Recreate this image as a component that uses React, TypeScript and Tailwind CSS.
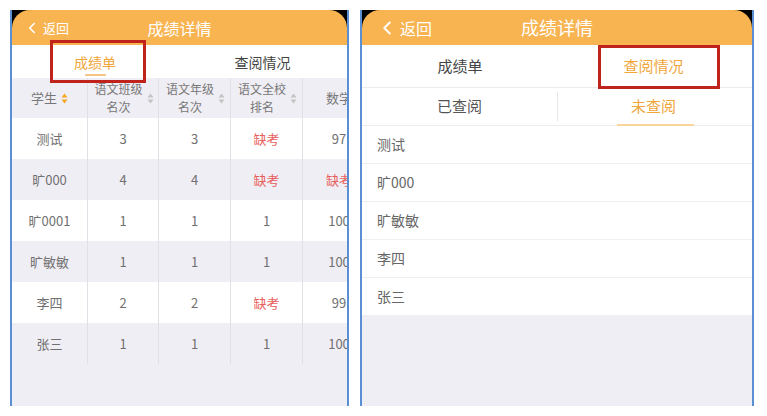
import { ChevronLeft } from 'lucide-react'

const rows = [
  { name: '测试', a: '3', b: '3', c: '缺考', d: '97' },
  { name: '旷000', a: '4', b: '4', c: '缺考', d: '缺考' },
  { name: '旷0001', a: '1', b: '1', c: '1', d: '100' },
  { name: '旷敏敏', a: '1', b: '1', c: '1', d: '100' },
  { name: '李四', a: '2', b: '2', c: '缺考', d: '99' },
  { name: '张三', a: '1', b: '1', c: '1', d: '100' },
]

const unread = ['测试', '旷000', '旷敏敏', '李四', '张三']

function SortIcon({ active }: { active?: boolean }) {
  const color = active ? '#f5a623' : '#c4c4c4'
  return (
    <svg width="7" height="11" viewBox="0 0 7 11" className="shrink-0">
      <path d="M3.5 0.5 L6.5 4.5 L0.5 4.5 Z" fill={color} />
      <path d="M3.5 10.5 L6.5 6.5 L0.5 6.5 Z" fill={color} />
    </svg>
  )
}

function Cell({ v, last }: { v: string; last?: boolean }) {
  const red = v === '缺考'
  return (
    <div
      className={`w-[72px] shrink-0 flex items-center justify-center ${last ? '' : 'border-r border-[#e2e0e6]'} ${
        red ? 'text-[#e8605c]' : 'text-[#707070]'
      }`}
    >
      {v}
    </div>
  )
}

function Header({ small }: { small?: boolean }) {
  return (
    <div className="bg-black">
      <div
        className={`bg-[#f8b451] rounded-t-[18px] flex items-center relative text-white ${
          small ? 'h-[35px] px-[13px]' : 'h-[35px] px-[16px]'
        }`}
      >
        <div className="flex items-center gap-[2px]">
          <ChevronLeft size={small ? 18 : 22} strokeWidth={2.2} className="-ml-[2px]" />
          <span className={small ? 'text-[13px]' : 'text-[16px]'}>返回</span>
        </div>
        <div
          className={`absolute inset-x-0 text-center pointer-events-none ${
            small ? 'text-[16px]' : 'text-[18px]'
          }`}
        >
          成绩详情
        </div>
      </div>
    </div>
  )
}

function ScorePanel() {
  return (
    <div className="w-[339px] h-[396px] border-x-2 border-[#5b8fd3] bg-[#f0eef5] flex flex-col overflow-hidden relative">
      <Header small />
      <div className="h-[33px] bg-white flex text-[14px]">
        <div className="w-[168px] flex flex-col items-center justify-center relative text-[#f0a63a]">
          <span className="mt-[2px] -ml-[2px] w-[70px] text-center">成绩单</span>
          <div className="absolute bottom-[2px] left-[73px] w-[21px] h-[2px] bg-[#f5c57f] rounded" />
        </div>
        <div className="flex-1 flex items-center justify-center text-[#444] pt-[2px] pr-[2px]">查阅情况</div>
      </div>
      <div className="text-[13px] overflow-hidden">
        <div className="flex w-[420px] h-[40px] bg-[#f0eef5] text-[12px] leading-[18px] text-[#777]">
          <div className="w-[76px] shrink-0 flex items-center justify-center gap-[4px] border-r border-[#e2e0e6] text-[13px]">
            学生
            <SortIcon active />
          </div>
          {[
            ['语文班级', '名次'],
            ['语文年级', '名次'],
            ['语文全校', '排名'],
          ].map(([l1, l2], i) => (
            <div
              key={l1}
              className={`${i === 0 ? 'w-[71px]' : 'w-[72px]'} shrink-0 flex items-center justify-center gap-[4px] border-r border-[#e2e0e6] pl-[2px]`}
            >
              <div className="text-center">
                <div>{l1}</div>
                <div>{l2}</div>
              </div>
              <SortIcon />
            </div>
          ))}
          <div className="w-[72px] shrink-0 flex items-center justify-center text-[13px]">数学</div>
        </div>
        {rows.map((r, i) => (
          <div
            key={r.name}
            className={`flex w-[420px] h-[41px] ${i % 2 === 0 ? 'bg-white' : 'bg-[#f0eef5]'}`}
          >
            <div className="w-[76px] shrink-0 flex items-center justify-center text-[#707070] border-r border-[#e2e0e6]">
              {r.name}
            </div>
            <div className="w-[71px] shrink-0 flex items-center justify-center text-[#707070] border-r border-[#e2e0e6]">
              {r.a}
            </div>
            <Cell v={r.b} />
            <Cell v={r.c} />
            <Cell v={r.d} last />
          </div>
        ))}
      </div>
      <div className="absolute left-[38px] top-[30px] w-[96px] h-[43px] border-[3px] border-[#c0231b]" />
    </div>
  )
}

function ReadPanel() {
  return (
    <div className="w-[394px] h-[396px] border-x-2 border-[#5b8fd3] bg-[#f0eef5] flex flex-col overflow-hidden relative">
      <Header />
      <div className="h-[43px] bg-white flex text-[15px] border-b border-[#ececec]">
        <div className="w-[196px] flex items-center justify-center text-[#444]">成绩单</div>
        <div className="flex-1 flex items-center justify-center text-[#f0a63a] -ml-[3px]">查阅情况</div>
      </div>
      <div className="h-[38px] bg-white flex text-[15px] border-b border-[#ececec]">
        <div className="w-[196px] flex items-center justify-center text-[#555] border-r border-[#e6e6e6] my-[4px]">
          已查阅
        </div>
        <div className="flex-1 flex items-center justify-center text-[#f0a63a] relative">
          <span className="-ml-[3px]">未查阅</span>
          <div className="absolute -bottom-[1px] left-[59px] w-[77px] h-[2px] bg-[#f8d59c]" />
        </div>
      </div>
      <div className="bg-white text-[14px] text-[#666]">
        {unread.map((n) => (
          <div key={n} className="h-[38px] flex items-center pl-[15px] border-b border-[#efefef]">
            {n}
          </div>
        ))}
      </div>
      <div className="absolute left-[236px] top-[35px] w-[122px] h-[44px] border-[3px] border-[#c0231b]" />
    </div>
  )
}

export default function App() {
  return (
    <div
      className="w-[767px] h-[416px] bg-white flex gap-[11px] pt-[10px] pl-[10px]"
      style={{ fontFamily: '"Noto Sans CJK SC", "Noto Sans", sans-serif' }}
    >
      <ScorePanel />
      <ReadPanel />
    </div>
  )
}
